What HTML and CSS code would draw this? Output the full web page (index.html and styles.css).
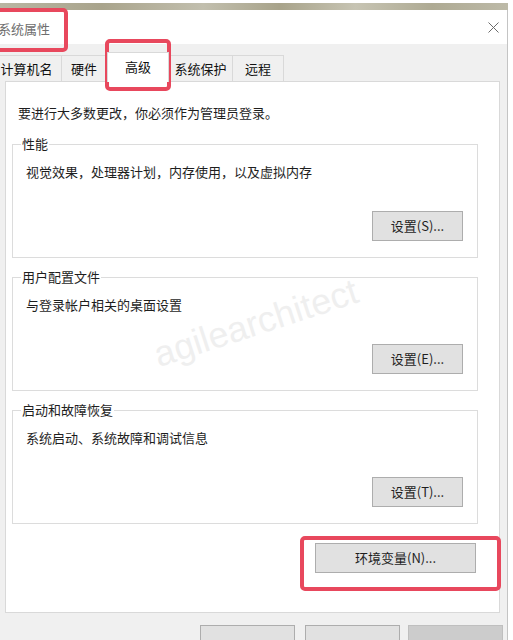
FILE: index.html
```html
<!DOCTYPE html>
<html lang="zh-CN">
<head>
    <meta charset="UTF-8">
    <meta name="viewport" content="width=device-width, initial-scale=1.0">
    <title>系统属性</title>
    <link rel="stylesheet" href="styles.css">
</head>
<body>
    <div class="desktop-strip"></div>

    <div class="window">
        <div class="titlebar">
            <span class="title">系统属性</span>
            <svg class="close" width="11" height="11" viewBox="0 0 11 11">
                <path d="M0.5 0.5 L10.5 10.5 M10.5 0.5 L0.5 10.5" stroke="#6b6b6b" stroke-width="1" fill="none"/>
            </svg>
        </div>

        <div class="content">
            <div class="tabs">
                <div class="tab tab-name">计算机名</div>
                <div class="tab tab-hw">硬件</div>
                <div class="tab tab-adv selected">高级</div>
                <div class="tab tab-protect">系统保护</div>
                <div class="tab tab-remote">远程</div>
            </div>

            <div class="panel">
                <p class="intro">要进行大多数更改，你必须作为管理员登录。</p>

                <fieldset class="group">
                    <legend>性能</legend>
                    <p class="desc">视觉效果，处理器计划，内存使用，以及虚拟内存</p>
                    <div class="group-actions">
                        <button class="btn">设置(S)...</button>
                    </div>
                </fieldset>

                <fieldset class="group">
                    <legend>用户配置文件</legend>
                    <p class="desc">与登录帐户相关的桌面设置</p>
                    <div class="group-actions">
                        <button class="btn">设置(E)...</button>
                    </div>
                </fieldset>

                <fieldset class="group">
                    <legend>启动和故障恢复</legend>
                    <p class="desc">系统启动、系统故障和调试信息</p>
                    <div class="group-actions">
                        <button class="btn">设置(T)...</button>
                    </div>
                </fieldset>

                <div class="env-row">
                    <button class="btn btn-env">环境变量(N)...</button>
                </div>
            </div>

            <div class="dialog-buttons">
                <button class="btn btn-dialog"></button>
                <button class="btn btn-dialog"></button>
                <button class="btn btn-dialog disabled"></button>
            </div>
        </div>
    </div>

    <div class="watermark">agilearchitect</div>

    <div class="mark mark-title"></div>
    <div class="mark mark-tab"></div>
    <div class="mark mark-env"></div>
</body>
</html>
```

FILE: styles.css
```css
* {
    margin: 0;
    padding: 0;
    box-sizing: border-box;
}

body {
    width: 513px;
    height: 640px;
    overflow: hidden;
    position: relative;
    background: #fff;
    font-family: "Noto Sans CJK SC", "Noto Sans", sans-serif;
    font-size: 13px;
    color: #1e1e1e;
}

.desktop-strip {
    margin-top: 3px;
    width: 508px;
    height: 7px;
    background: linear-gradient(90deg, #b9b6a3 0%, #a9a48c 20%, #c2bfae 40%, #a8a38a 55%, #c7c4b3 70%, #aeaa93 85%, #bdbaa8 100%);
}

.window {
    width: 508px;
    min-height: 640px;
    background: #f0f0f0;
    border-right: 1px solid #c4c4c4;
}

.titlebar {
    height: 34px;
    background: #fff;
    display: flex;
    align-items: center;
    justify-content: space-between;
    padding-right: 8px;
}

.title {
    margin-left: -2px;
    margin-top: 2px;
    color: #6e6e6e;
    font-size: 13px;
}

.close {
    display: block;
}

.content {
    padding: 8px 7px 0 5px;
}

/* tab strip */
.tabs {
    display: flex;
    align-items: flex-end;
    margin-left: -13px;
}

.tab {
    height: 26px;
    padding-top: 2px;
    line-height: 22px;
    text-align: center;
    background: #f0f0f0;
    border-top: 1px solid #d9d9d9;
    border-right: 1px solid #d9d9d9;
    color: #111;
}

.tab-name { width: 70px; }
.tab-hw { width: 45px; }
.tab-adv { width: 62px; }
.tab-protect { width: 64px; }
.tab-remote { width: 51px; }

.tab.selected {
    height: 30px;
    margin-bottom: -1px;
    padding-top: 1px;
    line-height: 26px;
    background: #fff;
    border-left: 1px solid #d9d9d9;
    position: relative;
    z-index: 1;
}

/* tab page */
.panel {
    background: #fff;
    border: 1px solid #d9d9d9;
    padding: 22px 21px 39px 6px;
}

.intro {
    line-height: 18px;
    margin-left: 6px;
    margin-bottom: 14px;
}

.group {
    border: 1px solid #dcdcdc;
    padding: 0 14px 16px 13px;
    margin-top: 11px;
}

.intro + .group {
    margin-top: 0;
}

.group legend {
    line-height: 16px;
    padding: 0 1px;
    margin-left: -5px;
}

.desc {
    line-height: 18px;
    margin-top: 11px;
}

.group-actions {
    display: flex;
    justify-content: flex-end;
    margin-top: 30px;
}

.btn {
    font-family: "Noto Sans CJK SC", "Noto Sans", sans-serif;
    font-size: 13px;
    color: #1e1e1e;
    background: #e1e1e1;
    border: 1px solid #adadad;
    height: 30px;
    width: 91px;
    line-height: 26px;
}

.env-row {
    display: flex;
    justify-content: flex-end;
    margin-top: 19px;
    padding-right: 2px;
}

.btn.btn-env {
    width: 161px;
}

.dialog-buttons {
    display: flex;
    justify-content: flex-end;
    margin-top: 12px;
    margin-right: -3px;
}

.btn.btn-dialog {
    width: 95px;
    margin-left: 10px;
}

.btn.btn-dialog.disabled {
    margin-left: 8px;
    background: #cccccc;
    border-color: #bfbfbf;
}

/* overlays */
.watermark {
    position: absolute;
    left: 256px;
    top: 323px;
    transform: translate(-50%, -50%) rotate(-18deg);
    font-family: "Liberation Sans", Arial, sans-serif;
    font-size: 36px;
    color: #efefef;
    white-space: nowrap;
    pointer-events: none;
}

.mark {
    position: absolute;
    border: 4px solid #e8485d;
    border-radius: 5px;
}

.mark-title {
    left: -10px;
    top: 8px;
    width: 78px;
    height: 44px;
}

.mark-tab {
    left: 105px;
    top: 39px;
    width: 66px;
    height: 52px;
}

.mark-env {
    left: 300px;
    top: 536px;
    width: 201px;
    height: 55px;
}
```
